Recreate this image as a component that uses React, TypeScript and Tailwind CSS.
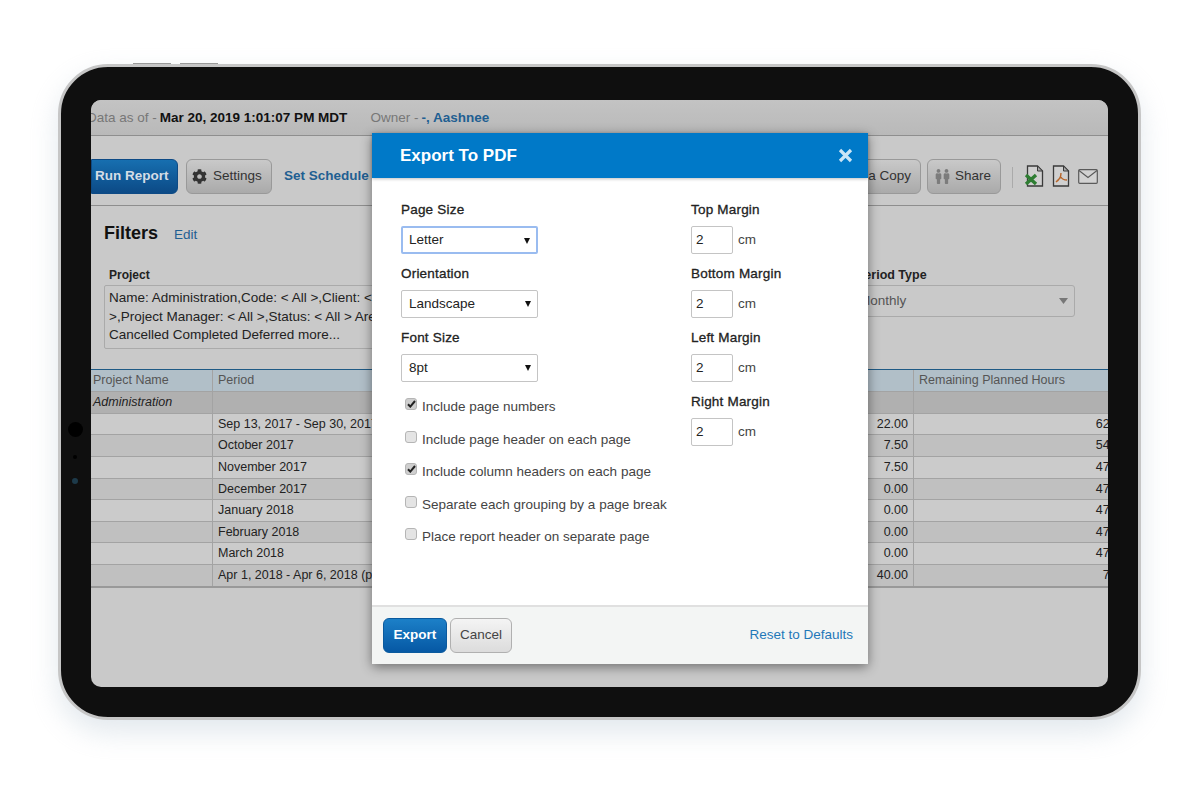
import React from 'react';
import { FaCog, FaMale } from 'react-icons/fa';

const rows = [
  ['Sep 13, 2017 - Sep 30, 2017', '22.00', '628.00'],
  ['October 2017', '7.50', '548.50'],
  ['November 2017', '7.50', '472.00'],
  ['December 2017', '0.00', '472.00'],
  ['January 2018', '0.00', '472.00'],
  ['February 2018', '0.00', '472.00'],
  ['March 2018', '0.00', '472.00'],
  ['Apr 1, 2018 - Apr 6, 2018 (partial)', '40.00', '72.00']
];

function FileIcon({ children }: { children: React.ReactNode }) {
  return <svg width="18" height="22" viewBox="0 0 18 22" fill="none" className="overflow-visible">
      <path d="M1.5 1h10l5 5v15h-15z" fill="#d0d0d0" stroke="#3a3a3a" strokeWidth="1.3" />
      <path d="M11.5 1v5h5z" fill="#a8a8a8" stroke="#3a3a3a" strokeWidth="1" />
      {children}
    </svg>;
}

function Select({ value, focused }: { value: string; focused?: boolean }) {
  return <div className={`relative h-[28px] w-[137px] rounded-[2px] bg-white flex items-center text-[13.5px] text-[#222] ${focused ? 'border-2 border-[#9abcf0] pl-[6px]' : 'border border-[#c4c4c4] pl-[7px]'}`}>
      {value}
      <svg className="absolute right-[6px] top-[10px]" width="6" height="6" viewBox="0 0 6 6">
        <path d="M0 0h6L3 6z" fill="#111" />
      </svg>
    </div>;
}

function Field({ label, children }: { label: string; children: React.ReactNode }) {
  return <div>
      <div className="h-[20px] mb-[6px] text-[13.5px] tracking-[0.2px] leading-[20px] text-[#222] [-webkit-text-stroke:0.3px_#222]">{label}</div>
      {children}
    </div>;
}

function Margin({ label }: { label: string }) {
  return <Field label={label}>
      <div className="flex items-center gap-[5px] text-[13.5px] text-[#444]">
        <div className="h-[28px] w-[42px] rounded-[2px] border border-[#c4c4c4] pl-[4px] leading-[26px] text-[#222]">2</div>
        cm
      </div>
    </Field>;
}

function Check({ label, checked }: { label: string; checked?: boolean }) {
  return <div className="h-[32.5px] flex items-center pl-[4px] text-[13.5px] text-[#444]">
      <span className={`w-[12px] h-[12px] mb-[6px] mr-[5px] rounded-[3px] border border-[#b5b5b5] flex items-center justify-center ${checked ? 'bg-[#cfcfcf]' : 'bg-[#e4e4e4]'}`}>
        {checked && <svg width="9" height="8" viewBox="0 0 9 8" fill="none">
            <path d="M1 4.2l2.3 2.4L8 1" stroke="#222" strokeWidth="2" />
          </svg>}
      </span>
      {label}
    </div>;
}

export default function App() {
  return <div className="h-[800px] bg-white pl-[58px] pt-[64px] font-['Liberation_Sans',Arial,sans-serif]">
      <div className="relative w-[1083px] h-[656px] rounded-[50px] bg-[#0f0f0f] border-[3px] border-[#c6c6c6] pl-[30px] pr-[30px] pt-[33px] pb-[30px] shadow-[0_12px_28px_rgba(190,205,215,0.45)]">
        <div className="absolute -top-[4px] left-[72px] w-[38px] h-px bg-[#999]" />
        <div className="absolute -top-[4px] left-[119px] w-[38px] h-px bg-[#999]" />
        <div className="absolute left-[7px] top-[355px] w-[15px] h-[15px] rounded-full bg-black" />
        <div className="absolute left-[12px] top-[388px] w-[4px] h-[4px] rounded-full bg-black" />
        <div className="absolute left-[11px] top-[411px] w-[6px] h-[6px] rounded-full bg-[#1d3a4a]" />

        <div className="relative h-full rounded-[10px] overflow-hidden bg-[#c9c9c9] text-[12.5px]">
          <div className="h-[36px] border-b border-[#8e8e8e] bg-gradient-to-b from-[#c3c3c3] to-[#b9b9b9] flex items-center pt-[2px] -ml-[4px] text-[13.5px] text-[#777]">
            <span>Data as of - </span>
            <span className="ml-[3px] font-bold text-[#111]">Mar 20, 2019 1:01:07 PM MDT</span>
            <span className="ml-[23px]">Owner - </span>
            <span className="ml-[3px] font-bold text-[#1f5f92]">-, Aashnee</span>
          </div>

          <div className="h-[70px] border-b border-[#8e8e8e] flex items-start pt-[23px] text-[13.5px]">
            <div className="h-[35px] w-[87px] rounded-r-[6px] border border-[#0d4a85] bg-gradient-to-b from-[#176fb0] to-[#0c4a86] flex items-center pl-[3px] font-bold text-[#d5dde6]">Run Report</div>
            <div className="ml-[8px] h-[35px] w-[86px] rounded-[6px] border border-[#999] bg-gradient-to-b from-[#c9c9c9] to-[#aaaaaa] flex items-center pl-[5px] gap-[6px] text-[#333]">
              <FaCog className="w-[15px] h-[15px] text-[#333]" />
              Settings
            </div>
            <span className="ml-[12px] h-[35px] leading-[33px] font-bold text-[#1f5f92]">Set Schedule</span>
            <div className="ml-auto h-[35px] w-[120px] rounded-[6px] border border-[#999] bg-gradient-to-b from-[#c9c9c9] to-[#aaaaaa] flex items-center justify-end pr-[9px] text-[#333]">Save a Copy</div>
            <div className="ml-[6px] h-[35px] w-[74px] rounded-[6px] border border-[#999] bg-gradient-to-b from-[#c9c9c9] to-[#aaaaaa] flex items-center pl-[5px] text-[#333]">
              <FaMale className="w-[11px] h-[15px] -mr-[3px] text-[#7c7c7c]" />
              <FaMale className="w-[11px] h-[15px] mr-[3px] text-[#7c7c7c]" />
              Share
            </div>
            <div className="ml-[11px] mt-[8px] w-px h-[21px] bg-[#aaa]" />
            <div className="ml-[13px] mr-[10px] mt-[6px] flex items-center gap-[8px]">
              <FileIcon>
                <path d="M0 10l10 9M10 10L0 19" stroke="#2e7d32" strokeWidth="3.4" />
              </FileIcon>
              <FileIcon>
                <path d="M9 8c0 4-2 7-5 9M9 12c1 2 3 3 6 3M9 12l-5 5" stroke="#b8662a" strokeWidth="1.4" />
              </FileIcon>
              <svg width="20" height="15" viewBox="0 0 20 15" fill="none">
                <rect x="0.7" y="0.7" width="18.6" height="13.6" rx="1" fill="#d2d2d2" stroke="#5a5a5a" strokeWidth="1.2" />
                <path d="M1 1.5l9 7 9-7" stroke="#5a5a5a" strokeWidth="1.1" />
              </svg>
            </div>
          </div>

          <div className="h-[163px] pl-[13px] pr-[33px] pt-[14px]">
            <div className="flex items-baseline">
              <span className="text-[18px] font-bold text-[#111]">Filters</span>
              <span className="ml-[16px] text-[13.5px] text-[#1f5f92]">Edit</span>
            </div>
            <div className="mt-[21px] flex justify-between">
              <div>
                <div className="pl-[5px] font-bold text-[12px] text-[#222] leading-[14px]">Project</div>
                <div className="mt-[3px] w-[500px] h-[64px] rounded-[2px] border border-[#aaa] pl-[4px] pt-[3px] text-[13.5px] leading-[18.5px] text-[#222] whitespace-nowrap">
                  Name: Administration,Code: &lt; All &gt;,Client: &lt; All<br />
                  &gt;,Project Manager: &lt; All &gt;,Status: &lt; All &gt; Are<br />
                  Cancelled Completed Deferred more...
                </div>
              </div>
              <div>
                <div className="pl-[3px] font-bold text-[12.5px] text-[#222] leading-[14px]">Period Type</div>
                <div className="relative mt-[3px] w-[222px] h-[32px] rounded-[3px] border border-[#aaa] pl-[5px] flex items-center text-[13.5px] text-[#555]">
                  Monthly
                  <svg className="absolute right-[6px] top-[12px]" width="9" height="6" viewBox="0 0 9 6">
                    <path d="M0 0h9L4.5 6z" fill="#777" />
                  </svg>
                </div>
              </div>
            </div>
          </div>

          <div className="grid grid-cols-[122px_350px_351px_226px] grid-rows-[22px_22px_21px_22px_22px_21px_22px_21px_22px_21px] w-[1049px] border-t border-[#1f5a85] border-b-2 border-b-[#999] text-[#222]">
            <div className="bg-[#b1bfc8] border-r border-b border-[#a3a3a3] pl-[2px] leading-[20px] text-[#555]">Project Name</div>
            <div className="bg-[#b1bfc8] border-r border-b border-[#a3a3a3] pl-[5px] leading-[20px] text-[#555]">Period</div>
            <div className="bg-[#b1bfc8] border-r border-b border-[#a3a3a3]" />
            <div className="bg-[#b1bfc8] border-b border-[#a3a3a3] pl-[5px] leading-[20px] text-[#555]">Remaining Planned Hours</div>
            <div className="bg-[#b0b0b0] border-r border-b border-[#a3a3a3] pl-[2px] leading-[21px] italic">Administration</div>
            <div className="bg-[#b0b0b0] border-r border-b border-[#a3a3a3]" />
            <div className="bg-[#b0b0b0] border-r border-b border-[#a3a3a3]" />
            <div className="bg-[#b0b0b0] border-b border-[#a3a3a3]" />
            {rows.map((row, i) => {
            const bg = i % 2 === 0 ? 'bg-[#cbcbcb]' : 'bg-[#c0c0c0]';
            const line = i < rows.length - 1 ? 'border-b' : '';
            return <React.Fragment key={row[0]}>
                  <div className={`${bg} ${line} border-r border-[#a3a3a3]`} />
                  <div className={`${bg} ${line} border-r border-[#a3a3a3] pl-[5px] leading-[20px] whitespace-nowrap overflow-hidden`}>{row[0]}</div>
                  <div className={`${bg} ${line} border-r border-[#a3a3a3] pr-[5px] leading-[20px] text-right`}>{row[1]}</div>
                  <div className={`${bg} ${line} border-[#a3a3a3] pr-[6px] leading-[20px] text-right`}>{row[2]}</div>
                </React.Fragment>;
          })}
          </div>

          <div className="absolute left-[281px] top-[33px] w-[496px] h-[531px] bg-white flex flex-col rounded-[2px] shadow-[0_3px_12px_rgba(0,0,0,0.45)]">
            <div className="h-[45px] shrink-0 bg-[#0079c8] flex items-center justify-between pl-[28px] pr-[15px] shadow-[0_1px_3px_rgba(0,0,0,0.25)]">
              <span className="text-[17px] font-bold text-white">Export To PDF</span>
              <svg width="15" height="15" viewBox="0 0 15 15" fill="none">
                <path d="M2 2l11 11M13 2L2 13" stroke="#cbe5f6" strokeWidth="3.2" />
              </svg>
            </div>
            <div className="flex-1 flex pl-[29px] pt-[22px]">
              <div className="w-[290px]">
                <div className="flex flex-col gap-[10px]">
                  <Field label="Page Size"><Select value="Letter" focused /></Field>
                  <Field label="Orientation"><Select value="Landscape" /></Field>
                  <Field label="Font Size"><Select value="8pt" /></Field>
                </div>
                <div className="mt-[9px]">
                  <Check label="Include page numbers" checked />
                  <Check label="Include page header on each page" />
                  <Check label="Include column headers on each page" checked />
                  <Check label="Separate each grouping by a page break" />
                  <Check label="Place report header on separate page" />
                </div>
              </div>
              <div className="flex flex-col gap-[10px]">
                <Margin label="Top Margin" />
                <Margin label="Bottom Margin" />
                <Margin label="Left Margin" />
                <Margin label="Right Margin" />
              </div>
            </div>
            <div className="h-[59px] shrink-0 border-t-2 border-[#e0e0e0] bg-[#f3f5f4] flex items-center pl-[11px] pr-[15px] pb-[1px] text-[13.5px]">
              <div className="h-[35px] w-[64px] rounded-[6px] border border-[#0a5a9e] bg-gradient-to-b from-[#1c80c8] to-[#0658a4] flex items-center justify-center font-bold text-white">Export</div>
              <div className="ml-[3px] h-[35px] w-[62px] rounded-[6px] border border-[#b0b0b0] bg-gradient-to-b from-[#f4f4f4] to-[#dcdcdc] flex items-center justify-center text-[#444]">Cancel</div>
              <span className="ml-auto text-[#1f78b8]">Reset to Defaults</span>
            </div>
          </div>
        </div>
      </div>
    </div>;
}
